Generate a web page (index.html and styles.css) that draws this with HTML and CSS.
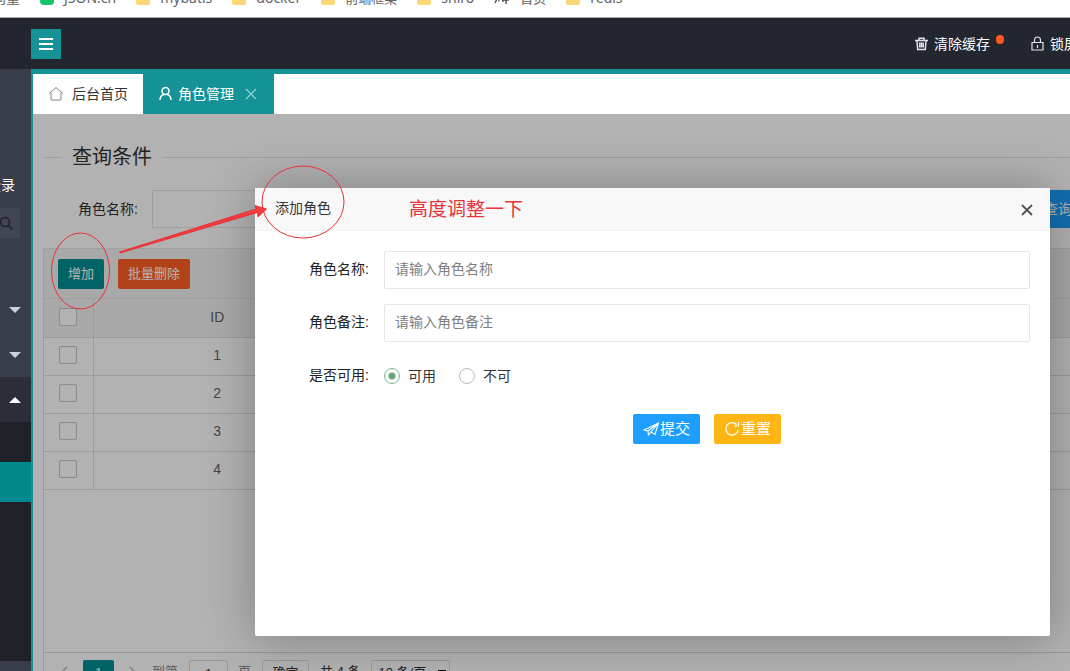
FILE: index.html
```html
<!DOCTYPE html>
<html lang="zh-CN">
<head>
<meta charset="utf-8">
<meta name="viewport" content="width=device-width, initial-scale=1">
<title>角色管理</title>
<link rel="stylesheet" href="styles.css">
</head>
<body>
<nav class="bookmarks" aria-label="书签">
  <a class="bookmark first" href="#">向量</a>
  <a class="bookmark" href="#"><i class="site"></i>JSON.cn</a>
  <a class="bookmark" href="#"><i class="folder"></i>mybatis</a>
  <a class="bookmark" href="#"><i class="folder"></i>docker</a>
  <a class="bookmark" href="#"><i class="folder"></i><span class="han">前端框架</span></a>
  <a class="bookmark" href="#"><i class="folder"></i>shiro</a>
  <a class="bookmark" href="#"><svg width="16" height="14" viewBox="0 0 16 14" fill="none" stroke="#555" stroke-width="1.5"><path d="M1 12 5 4v5l4-6v8M8 9h7M12 2v11"/></svg><span class="han">首页</span></a>
  <a class="bookmark" href="#"><i class="folder"></i>redis</a>
</nav>
<header class="header">
  <button class="menu-toggle" type="button" aria-label="菜单">
    <svg width="16" height="14" viewBox="0 0 16 14" stroke="#fff" stroke-width="2"><path d="M1 2h14M1 7h14M1 12h14"/></svg>
  </button>
  <div class="header-links">
    <a href="#"><svg width="13" height="14" viewBox="0 0 13 14" fill="none" stroke="#dfe2ea" stroke-width="1.5"><path d="M0 3.5h13M4 3V1.2h5V3M2 4l.7 8.5h7.6L11 4" /><path d="M4.8 5.500v5M6.500 5.500v5M8.200 5.500v5"/></svg>清除缓存<span class="dot"></span></a>
    <a href="#"><svg width="13" height="15" viewBox="0 0 13 15" fill="none" stroke="#dfe2ea" stroke-width="1.2"><path d="M1 6.500h11V14H1zM3.500 6V4a3 3 0 0 1 6 0v2M6.500 9v3"/></svg>锁屏</a>
  </div>
</header>
<div class="shell">
  <aside class="sidebar">
    <div class="user">登录</div>
    <button class="side-search" type="button" aria-label="搜索"><svg width="14" height="14" viewBox="0 0 14 14" fill="none" stroke="#1f222b" stroke-width="1.5"><circle cx="5" cy="6" r="4.500"/><path d="m8.500 9.500 4 4"/></svg></button>
    <ul class="side-nav">
      <li><span class="caret"></span></li>
      <li><span class="caret"></span></li>
      <li class="open"><span class="caret up"></span></li>
    </ul>
    <ul class="sub-nav"><li></li><li class="current"></li></ul>
  </aside>
  <main class="main">
    <div class="tabs">
      <a class="tab" href="#"><svg width="16" height="16" viewBox="0 0 16 16" fill="none" stroke="#888" stroke-width="1"><path d="M1 7.500 8 1.500l7 6M3 6.500V14h10V6.500"/></svg>后台首页</a>
      <a class="tab active" href="#"><svg width="13" height="16" viewBox="0 0 13 16" fill="none" stroke="#fff" stroke-width="1.500"><circle cx="6.500" cy="5" r="3.500"/><path d="M1 14c0-3.500 2-5 4-5.500M12 14c0-3.500-2-5-4-5.500"/></svg>角色管理<svg class="tab-close" width="12" height="12" viewBox="0 0 12 12" stroke="#8fd0d2" stroke-width="1.300"><path d="m1 1 10 10M11 1 1 11"/></svg></a>
    </div>
    <div class="content">
      <h2 class="section-title">查询条件</h2>
      <form class="query">
        <label for="q-name">角色名称:</label>
        <input id="q-name" type="text">
        <button type="button">查询</button>
      </form>
      <section class="grid">
        <div class="toolbar">
          <button class="add" type="button">增加</button>
          <button class="remove" type="button">批量删除</button>
        </div>
        <table>
          <thead><tr><th class="pick"><input type="checkbox" aria-label="全选"></th><th class="id">ID</th><th></th></tr></thead>
          <tbody>
            <tr><td class="pick"><input type="checkbox" aria-label="选择 1"></td><td class="id">1</td><td></td></tr>
            <tr><td class="pick"><input type="checkbox" aria-label="选择 2"></td><td class="id">2</td><td></td></tr>
            <tr><td class="pick"><input type="checkbox" aria-label="选择 3"></td><td class="id">3</td><td></td></tr>
            <tr><td class="pick"><input type="checkbox" aria-label="选择 4"></td><td class="id">4</td><td></td></tr>
          </tbody>
        </table>
        <div class="pager">
          <button class="arrow" type="button" aria-label="上一页"><svg width="8" height="14" viewBox="0 0 8 14" fill="none" stroke="#bbb" stroke-width="1.500"><path d="M7 1 1 7l6 6"/></svg></button>
          <button class="page" type="button">1</button>
          <button class="arrow" type="button" aria-label="下一页"><svg width="8" height="14" viewBox="0 0 8 14" fill="none" stroke="#bbb" stroke-width="1.500"><path d="m1 1 6 6-6 6"/></svg></button>
          <label class="muted" for="jump">到第</label>
          <input id="jump" type="text" value="1">
          <span class="muted unit">页</span>
          <button class="go" type="button">确定</button>
          <span class="total">共 4 条</span>
          <select aria-label="每页条数"><option>10 条/页</option></select>
        </div>
      </section>
      <div class="shade"></div>
      <div class="dialog" role="dialog" aria-labelledby="dialog-title">
        <div class="dialog-head">
          <h3 id="dialog-title">添加角色</h3>
          <button type="button" aria-label="关闭"><svg width="14" height="14" viewBox="0 0 14 14" stroke="#555" stroke-width="1.800"><path d="m2 2 10 10M12 2 2 12"/></svg></button>
        </div>
        <form class="dialog-form">
          <label for="name">角色名称:</label>
          <input id="name" type="text" placeholder="请输入角色名称">
          <label for="remark">角色备注:</label>
          <input id="remark" type="text" placeholder="请输入角色备注">
          <span class="caption" id="state">是否可用:</span>
          <div class="radios" role="radiogroup" aria-labelledby="state">
            <label><input type="radio" name="state" checked>可用</label>
            <label><input type="radio" name="state">不可</label>
          </div>
          <div class="actions">
            <button class="submit" type="button"><svg width="17" height="16" viewBox="0 0 17 16" fill="none" stroke="#fff" stroke-width="1.100"><path d="M1 9 15.500 2 12 13.500 8 11l-2.500 3-.5-4zM5 10l10.500-8L8 11"/></svg>提交</button>
            <button class="reset" type="reset"><svg width="17" height="16" viewBox="0 0 17 16" fill="none" stroke="#fff" stroke-width="1.200"><path d="M12.500 3.500A6.200 6.200 0 1 0 14.200 9M10 5h4.500V1"/></svg>重置</button>
          </div>
        </form>
      </div>
    </div>
  </main>
</div>
<svg class="marks" width="1070" height="671" viewBox="0 0 1070 671" fill="none" stroke="#e8323c" aria-hidden="true">
  <ellipse cx="80.500" cy="271" rx="29" ry="38"/>
  <ellipse cx="303" cy="202" rx="41" ry="36"/>
  <path d="M119.500 252 256 209 255 205.500 266.500 209 258 217 257.500 212.500 120 253z" fill="#f03c3c"/>
</svg>
<p class="note">高度调整一下</p>
</body>
</html>
```

FILE: styles.css
```css
* { box-sizing: border-box; }
body {
  margin: 0;
  height: 100vh;
  display: flex;
  flex-direction: column;
  overflow: hidden;
  position: relative;
  background: #fff;
  color: #333;
  font: 14px/20px "Liberation Sans", "Noto Sans CJK SC", sans-serif;
}
button, input, select { font: inherit; color: inherit; }
button { border: 0; padding: 0; cursor: pointer; }
a { color: inherit; text-decoration: none; }
ul { margin: 0; padding: 0; list-style: none; }
svg { display: block; flex: none; }

.bookmarks {
  flex: none;
  display: flex;
  align-items: flex-end;
  gap: 20px;
  height: 18px;
  padding-bottom: 9px;
  overflow: hidden;
  border-bottom: 1px solid #a9aaae;
  font-family: "Noto Sans", "Noto Sans CJK SC", sans-serif;
  color: #5f6368;
}
.bookmark { display: flex; flex: none; align-items: center; gap: 10px; }
.bookmark.first { margin-left: -8px; }
.han { font-size: 13px; }
.folder, .site { width: 14px; height: 14px; border-radius: 2px; background: #fbd775; }
.site { background: #16c46c; border-radius: 4px; }

.header {
  flex: none;
  display: flex;
  align-items: center;
  justify-content: space-between;
  height: 51px;
  padding-left: 31px;
  background: #23262e;
  color: #fff;
}
.menu-toggle { display: grid; place-items: center; width: 30px; height: 30px; background: #159297; }
.header-links { display: flex; gap: 27px; margin-right: -8px; }
.header-links a { display: flex; align-items: center; gap: 6px; }
.dot { width: 8px; height: 9px; margin: 0 0 8px; border-radius: 4px; background: #ff5722; }

.shell { flex: 1; display: flex; min-height: 0; }
.sidebar {
  flex: none;
  display: flex;
  flex-direction: column;
  width: 33px;
  padding: 106px 0 10px;
  border-right: 2px solid #159297;
  background: #393d49;
  color: #fff;
}
.user { display: flex; justify-content: flex-end; padding-right: 16px; white-space: nowrap; }
.side-search { display: grid; place-items: center start; flex: none; width: 20px; height: 30px; margin: 13px 0 49px; background: #424652; }
.side-nav li { display: flex; align-items: center; height: 45px; padding-left: 9px; }
.side-nav .open { background: #2b2e38; }
.caret { border: 6px solid transparent; border-top-color: #ccd0dc; border-bottom-width: 0; }
.caret.up { border-width: 0 6px 6px; border-bottom-color: #fff; }
.sub-nav { flex: 1; background: #1f2128; }
.sub-nav li { height: 40px; }
.sub-nav .current { background: #00888c; }

.main { flex: 1; display: flex; flex-direction: column; min-width: 0; border-top: 5px solid #159297; }
.tabs { display: flex; flex: none; height: 40px; background: #fff; }
.tab { display: flex; align-items: center; gap: 8px; padding: 0 15px; }
.tab.active { gap: 6px; padding: 0 17px 0 16px; background: #159297; color: #fff; }
.tab-close { margin-left: 5px; }

.content { flex: 1; display: flex; flex-direction: column; min-height: 0; padding: 28px 0 0 10px; position: relative; overflow: hidden; }
.section-title { display: flex; align-items: center; gap: 10px; margin: 0; font-size: 20px; line-height: 30px; font-weight: 400; }
.section-title::before, .section-title::after { content: ""; width: 19px; height: 1px; background: #e6e6e6; }
.section-title::after { flex: 1; }
.query { display: flex; align-items: center; gap: 14px; margin: 18px -20px 20px 35px; }
.query input { flex: none; width: 190px; height: 38px; border: 1px solid #e6e6e6; background: #fff; }
.query button { height: 38px; margin-left: auto; padding: 0 18px; background: #1e9fff; color: #fff; }

.grid { flex: 1; display: flex; flex-direction: column; min-height: 0; border-left: 1px solid #e0e0e0; }
.toolbar { display: flex; flex: none; align-items: center; gap: 14px; height: 51px; padding-left: 14px; background: #f2f2f2; border-bottom: 1px solid #e6e6e6; border-top: 1px solid #e6e6e6; }
.toolbar button { height: 30px; padding: 0 10px; border-radius: 2px; color: #fff; font-size: 13px; }
.toolbar .add { background: #009094; }
.toolbar .remove { background: #ff5f22; }
table { width: 100%; border-collapse: collapse; table-layout: fixed; color: #666; line-height: 18px; }
th, td { height: 38px; padding: 0 0 2px; border-bottom: 1px solid #e0e0e0; font-weight: 400; text-align: center; }
th { background: #f2f2f2; }
.pick { width: 49px; border-right: 1px solid #e0e0e0; }
.id { width: 248px; }
.pick input { appearance: none; display: block; width: 18px; height: 18px; margin: 0 auto; border: 1px solid #c8c8c8; border-radius: 2px; background: #fff; }
.pager { display: flex; flex: none; align-items: flex-start; height: 19px; margin-top: auto; padding: 7px 0 0 9px; border-top: 1px solid #dcdcdc; font-size: 13px; line-height: 24px; }
.pager button, .pager input, .pager select { flex: none; height: 26px; border: 1px solid #dcdcdc; border-radius: 2px; background: #fff; }
.pager .arrow { display: grid; place-items: center; width: 22px; border: 0; }
.pager .page { width: 31px; margin: 0 8px; border: 0; background: #009094; color: #fff; }
.muted { color: #888; }
.pager label { margin-left: 8px; }
.pager input { width: 39px; margin: 0 10px 0 11px; padding: 0; text-align: center; }
.pager .go { width: 47px; margin-left: 11px; }
.total { margin: 0 10px 0 11px; }
.pager select {
  appearance: none;
  width: 79px;
  padding: 0 7px;
  background: #fff conic-gradient(from -45deg at 50% 100%, #111 90deg, transparent 0) 66px 9px / 8px 4px no-repeat;
  background-image: linear-gradient(#111, #111);
}
.shade { position: absolute; inset: 0; background: #000; opacity: .3; }

.dialog { position: absolute; top: 74px; right: 20px; left: 222px; height: 448px; background: #fff; border-radius: 2px; box-shadow: 1px 1px 50px rgba(0, 0, 0, .3); }
.dialog-head { display: flex; align-items: center; justify-content: space-between; height: 43px; padding: 1px 16px 0 20px; background: #f8f8f8; border-bottom: 1px solid #f4f4f4; }
.dialog-head h3 { margin: 0 0 4px; font-size: 14px; font-weight: 400; }
.dialog-head button { background: none; }
.dialog-form { display: grid; grid-template-columns: 114px 1fr; grid-auto-rows: 38px; align-items: center; column-gap: 15px; row-gap: 15px; padding: 20px 20px 0 0; }
.dialog-form > label, .caption { padding-bottom: 2px; text-align: right; color: #222; }
.dialog-form > input { width: 100%; height: 38px; padding: 0 10px 2px; border: 1px solid #e6e6e6; border-radius: 2px; background: #fff; }
.dialog-form > input::placeholder { color: #808080; opacity: 1; }
.radios { display: flex; gap: 23px; }
.radios label { display: flex; align-items: center; gap: 8px; }
.radios input { appearance: none; width: 16px; height: 16px; margin: 0; border: 1px solid #bbb; border-radius: 50%; }
.radios input:checked { border-color: #77bd8c; background: radial-gradient(#5fa975 0 3px, #fff 4px); }
.actions { grid-column: 2; display: flex; justify-content: center; gap: 14px; }
.actions button { display: flex; align-items: center; height: 30px; padding: 0 10px; border-radius: 2px; color: #fff; font-size: 15px; }
.submit { background: #1e9fff; }
.reset { background: #ffb513; }

.marks { position: absolute; top: 0; left: 0; pointer-events: none; }
.note { position: absolute; top: 197px; left: 409px; margin: 0; color: #e8323c; font-size: 19px; line-height: 26px; }
```
